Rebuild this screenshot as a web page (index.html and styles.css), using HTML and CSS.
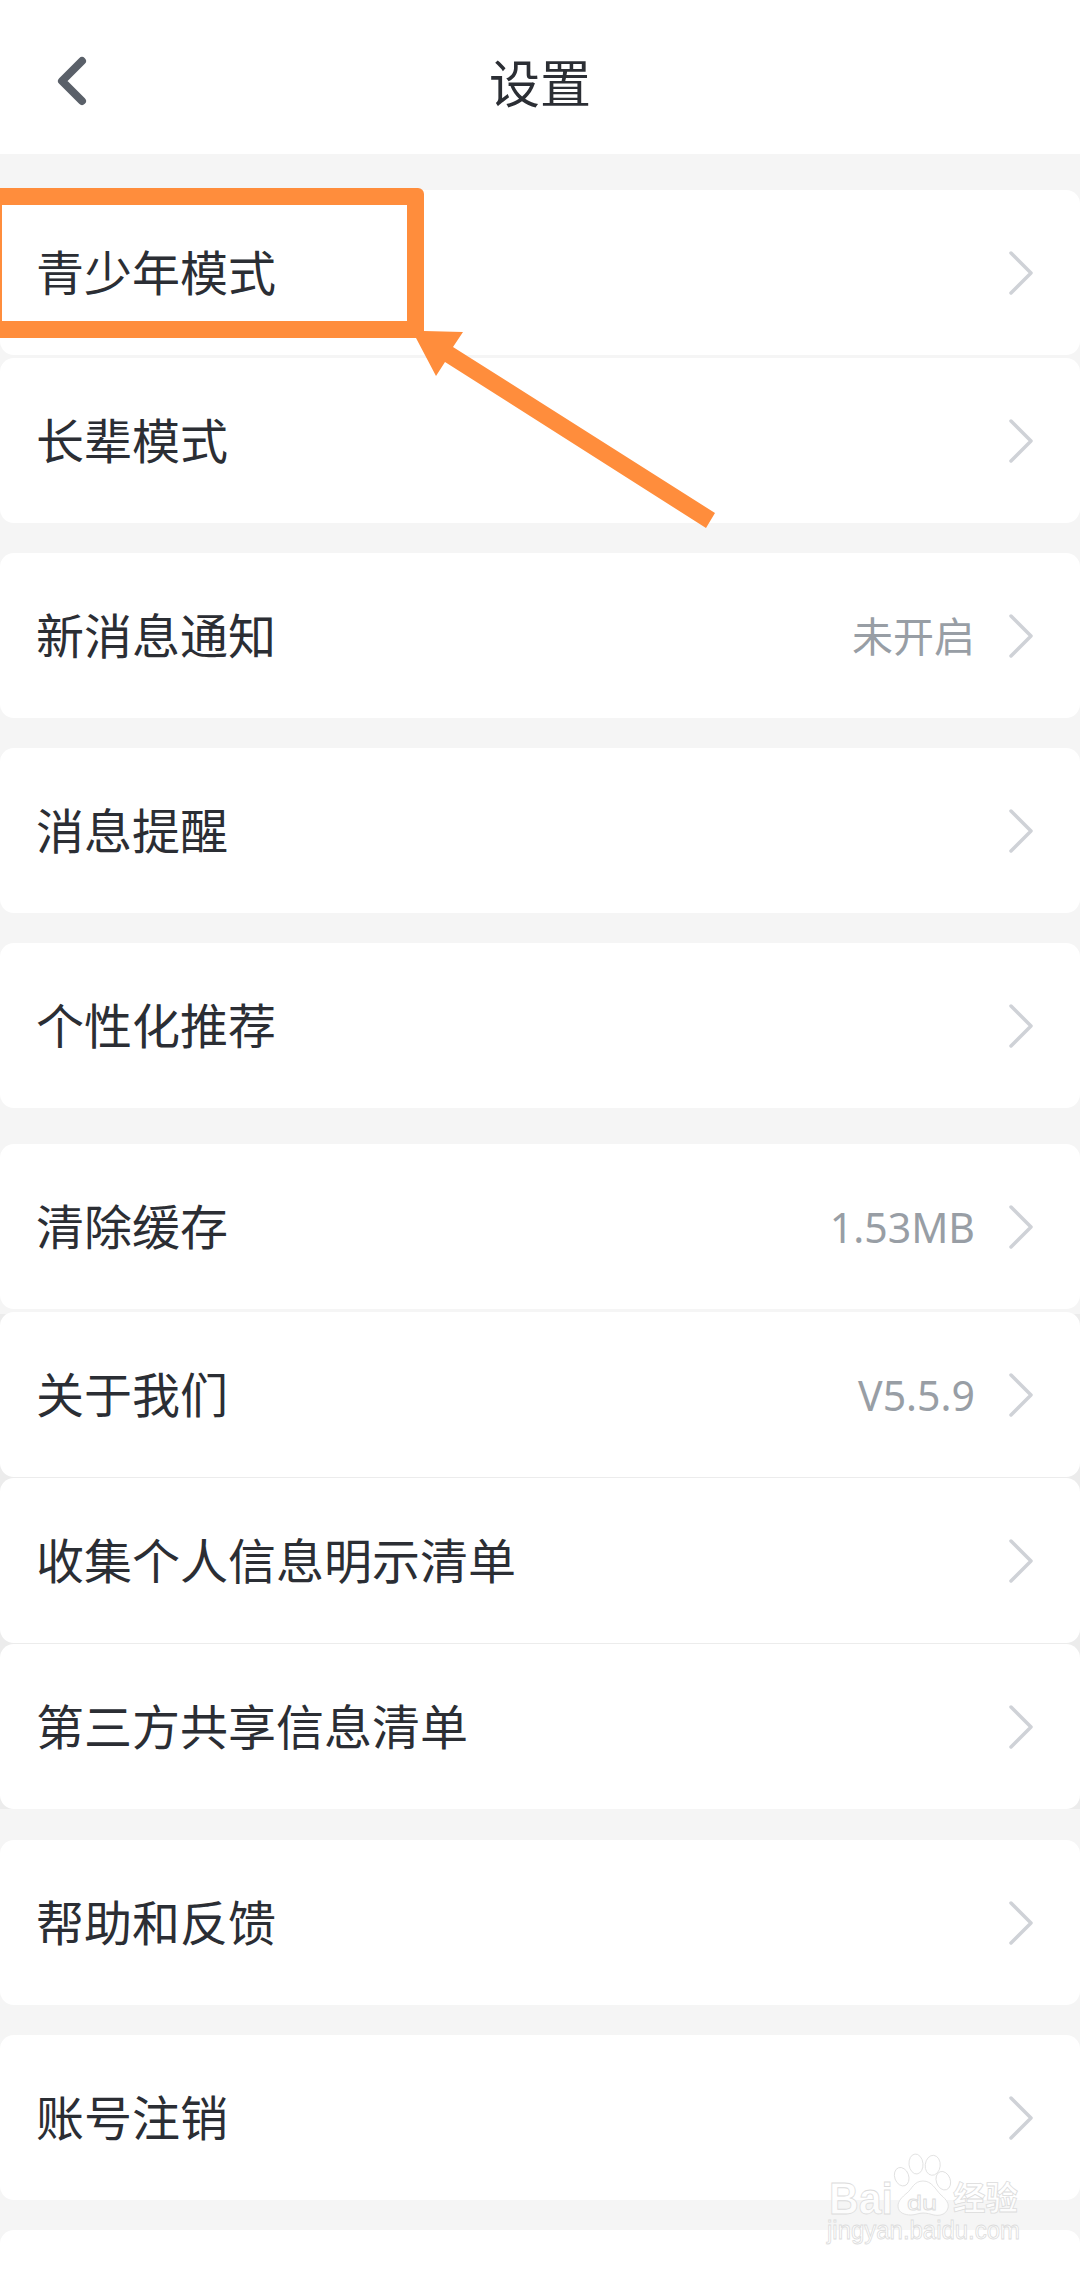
FILE: index.html
```html
<!DOCTYPE html>
<html lang="zh-CN">
<head>
<meta charset="utf-8">
<title>设置</title>
<link rel="stylesheet" href="styles.css">
</head>
<body>
<div class="page">
  <header class="header">
    <svg class="back" width="44" height="60" viewBox="0 0 44 60"><path d="M30 8 10 28l20 20"/></svg>
    <h1 class="title">设置</h1>
    <span></span>
  </header>
  <main class="list">
    <section class="group">
      <a class="row"><span class="label">青少年模式</span><svg class="chev" viewBox="0 0 24 44"><path d="M2 2l20 20L2 42"/></svg></a>
      <a class="row"><span class="label">长辈模式</span><svg class="chev" viewBox="0 0 24 44"><path d="M2 2l20 20L2 42"/></svg></a>
    </section>
    <section class="group">
      <a class="row"><span class="label">新消息通知</span><span class="value">未开启</span><svg class="chev" viewBox="0 0 24 44"><path d="M2 2l20 20L2 42"/></svg></a>
    </section>
    <section class="group">
      <a class="row"><span class="label">消息提醒</span><svg class="chev" viewBox="0 0 24 44"><path d="M2 2l20 20L2 42"/></svg></a>
    </section>
    <section class="group">
      <a class="row"><span class="label">个性化推荐</span><svg class="chev" viewBox="0 0 24 44"><path d="M2 2l20 20L2 42"/></svg></a>
    </section>
    <section class="group group-about">
      <a class="row"><span class="label">清除缓存</span><span class="value">1.53MB</span><svg class="chev" viewBox="0 0 24 44"><path d="M2 2l20 20L2 42"/></svg></a>
      <a class="row"><span class="label">关于我们</span><span class="value">V5.5.9</span><svg class="chev" viewBox="0 0 24 44"><path d="M2 2l20 20L2 42"/></svg></a>
      <a class="row"><span class="label">收集个人信息明示清单</span><svg class="chev" viewBox="0 0 24 44"><path d="M2 2l20 20L2 42"/></svg></a>
      <a class="row"><span class="label">第三方共享信息清单</span><svg class="chev" viewBox="0 0 24 44"><path d="M2 2l20 20L2 42"/></svg></a>
    </section>
    <section class="group group-help">
      <a class="row"><span class="label">帮助和反馈</span><svg class="chev" viewBox="0 0 24 44"><path d="M2 2l20 20L2 42"/></svg></a>
    </section>
    <section class="group">
      <a class="row"><span class="label">账号注销</span><svg class="chev" viewBox="0 0 24 44"><path d="M2 2l20 20L2 42"/></svg></a>
    </section>
    <section class="group">
      <a class="row"></a>
    </section>
  </main>

  <div class="mark-box"></div>
  <svg class="mark-arrow" width="1080" height="600" viewBox="0 0 1080 600">
    <polygon points="424,331 463,332 453,347 715,513 706,528 445,362 436,376 416,338"/>
  </svg>

  <svg class="watermark" width="240" height="110" viewBox="0 0 240 110">
    <g class="wm-shape">
      <ellipse cx="78.7" cy="30.7" rx="7" ry="9.5" transform="rotate(-20 78.7 30.7)"/>
      <ellipse cx="93" cy="18" rx="7" ry="10" transform="rotate(-6 93 18)"/>
      <ellipse cx="109.7" cy="19.3" rx="7.5" ry="10" transform="rotate(6 109.7 19.3)"/>
      <ellipse cx="120.3" cy="34.7" rx="7" ry="9.5" transform="rotate(-20 120.3 34.7)"/>
      <path d="M100 35c9 0 12 8 18 14 6 5 8 9 7 13-2 7-9 8-14 7-4-1-7-2-11-2-4 0-8 2-12 2-6 0-13-2-13-9 0-5 4-9 9-13 5-4 7-12 16-12z"/>
    </g>
    <text class="wm-big" x="6" y="68" textLength="64" lengthAdjust="spacingAndGlyphs">Bai</text>
    <text class="wm-du" x="84" y="64" textLength="30" lengthAdjust="spacingAndGlyphs">du</text>
    <text class="wm-cn" x="130" y="64" textLength="65" lengthAdjust="spacingAndGlyphs">经验</text>
    <text class="wm-url" x="4" y="93" textLength="193" lengthAdjust="spacingAndGlyphs">jingyan.baidu.com</text>
  </svg>
</div>
</body>
</html>
```

FILE: styles.css
```css
* {
  box-sizing: border-box;
}

html,
body {
  margin: 0;
  padding: 0;
  background: #f5f5f5;
}

.page {
  position: relative;
  width: 1080px;
  height: 2269px;
  overflow: hidden;
  font-family: "Noto Sans", "Noto Sans CJK SC", sans-serif;
  color: #2b2e34;
}

.header {
  display: grid;
  grid-template-columns: 1fr auto 1fr;
  align-items: center;
  height: 154px;
  padding-top: 12px;
  background: #fff;
}

.back {
  display: block;
  margin-left: 52px;
}

.back path {
  fill: none;
  stroke: #5a6069;
  stroke-width: 8;
  stroke-linecap: round;
  stroke-linejoin: round;
}

.title {
  margin: 0;
  font-size: 51px;
  font-weight: 400;
  line-height: 60px;
}

.list {
  display: flex;
  flex-direction: column;
  gap: 30px;
  padding-top: 36px;
}

.group {
  display: flex;
  flex-direction: column;
  gap: 3px;
}

.group-about {
  margin-top: 6px;
  gap: 1px;
  background: linear-gradient(#f5f5f5 170px, #ececec 170px);
}

.group-about .row:first-child {
  margin-bottom: 2px;
}

.group-help {
  margin-top: 1px;
}

.row {
  display: flex;
  align-items: center;
  height: 165px;
  padding: 0 47px 0 36px;
  background: #fff;
  border-radius: 14px;
}

.label {
  flex: 1;
  font-size: 48px;
  line-height: 60px;
}

.value {
  margin-right: 34px;
  font-size: 41px;
  line-height: 50px;
  color: #989ea5;
}

.chev {
  display: block;
  width: 24px;
  height: 44px;
  flex: none;
}

.chev path {
  fill: none;
  stroke: #cfd2d7;
  stroke-width: 3.5;
  stroke-linecap: round;
  stroke-linejoin: round;
}

.mark-box {
  position: absolute;
  left: -2px;
  top: 188px;
  width: 426px;
  height: 150px;
  border: 17px solid #ff8d3c;
  border-left-width: 4px;
  border-top-right-radius: 6px;
}

.mark-arrow {
  position: absolute;
  left: 0;
  top: 0;
}

.mark-arrow polygon {
  fill: #ff8d3c;
}

.watermark {
  position: absolute;
  left: 823px;
  top: 2146px;
}

.watermark ellipse,
.watermark path,
.watermark text {
  fill: rgba(255, 255, 255, 0.8);
  stroke: #dcdcdc;
  stroke-width: 0.8;
}

.wm-big {
  font-family: "Liberation Sans", sans-serif;
  font-size: 44px;
  font-weight: 700;
}

.wm-du {
  font-family: "Liberation Sans", sans-serif;
  font-size: 21px;
}

.wm-cn {
  font-family: "Noto Sans CJK SC", sans-serif;
  font-size: 33px;
  font-weight: 700;
}

.wm-url {
  font-family: "Liberation Sans", sans-serif;
  font-size: 25px;
}
```
